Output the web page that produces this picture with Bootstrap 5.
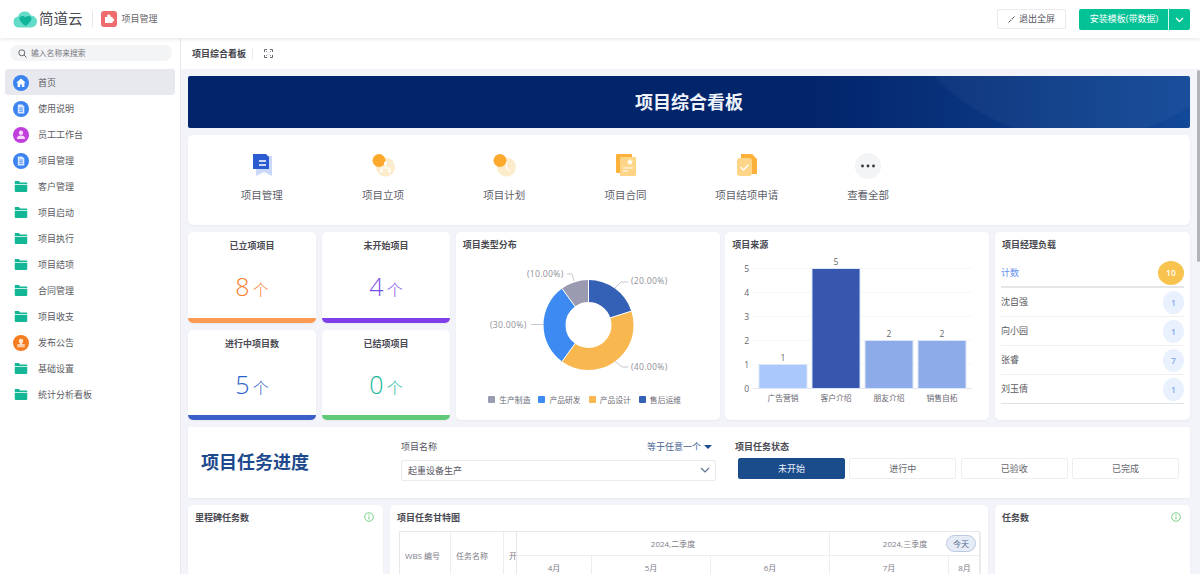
<!DOCTYPE html>
<html lang="zh-CN">
<head>
    <meta charset="UTF-8">
    <title>项目综合看板</title>
    <link href="https://cdn.jsdelivr.net/npm/bootstrap@5.3.3/dist/css/bootstrap.min.css" rel="stylesheet">
    <style>
        html, body { height: 100%; }
        body { overflow: hidden; font-family: "Open Sans", "Noto Sans CJK SC", sans-serif; font-size: 9px; color: #55555f; background: #fff; }
        .top-bar { height: 38px; flex: none; padding: 0 10px 0 13px; background: #fff; box-shadow: 0 1px 4px rgba(30, 30, 60, .12); position: relative; z-index: 2; }
        .logo-text { font-size: 14.5px; color: #4a4a52; margin-left: 2px; }
        .top-sep { width: 1px; height: 16px; background: #e8e8ec; margin: 0 8px 0 9px; }
        .app-name { margin-left: 5px; color: #666; }
        .btn-exit { width: 69px; height: 20px; padding: 0; font-size: 9px; color: #55555f; background: #fff; border: 1px solid #e9e9ee; border-radius: 2px; margin-right: 13px; }
        .btn-install { height: 21px; padding: 0; font-size: 9px; color: #fff; background: #04c295; border: 0; border-radius: 2px; }
        .btn-install:first-child { width: 90px; }
        .btn-install:last-child { width: 22px; border-left: 1px solid #d8f5ec; }
        .side-bar { width: 181px; flex: none; padding: 7px 5px 0; border-right: 1px solid #e9e9ee; background: #fff; }
        .side-search { height: 16px; margin: 0 3px 8px 5px; padding: 1px 0 0 8px; gap: 4px; background: #f3f4f6; border-radius: 8px; font-size: 7.8px; color: #77777f; }
        .side-link { height: 26px; padding: 1px 0 0 8px; gap: 9px; color: #5a5a62; border-radius: 3px; font-size: 9px; }
        .side-link.active { background: #e8e9ee; }
        .side-link svg { flex: none; }
        .sub-bar { height: 31px; flex: none; padding-left: 11px; background: #fff; }
        .sub-title { font-weight: 700; color: #44444c; }
        .sub-sep { width: 1px; height: 12px; background: #ececf0; margin: 0 11px 0 6px; }
        .main-scroll { position: relative; flex: 1 1 0; min-height: 0; overflow: hidden; padding: 7px 10px 0 7px; background: #f3f4f9; }
        .scroll-thumb { position: absolute; top: 1px; right: 0; width: 3px; height: 192px; background: #b4b4b8; border-radius: 2px; }
        .panel { background: #fff; border: 0; border-radius: 5px; box-shadow: 0 1px 2px rgba(40, 40, 80, .05); }
        .hero { height: 52px; margin-bottom: 7px; border-radius: 2px; font-size: 18px; font-weight: 700; color: #eef2fa;
            background: radial-gradient(circle 200px at 892px -136px, rgba(255, 255, 255, .035) 99%, rgba(255, 255, 255, 0) 100%), linear-gradient(90deg, #02246a 0, #02246a 62%, #124998 100%); }
        .quick-panel { height: 90px; margin-bottom: 7px; padding: 18px 0 0 13px; }
        .quick-item { width: 121.3px; font-size: 10.5px; color: #60606a; }
        .quick-icon { height: 26px; margin-bottom: 9px; }
        .stat-row { display: grid; grid-template-columns: 262px 264px 264px 195px; gap: 5.67px; height: 188px; margin-bottom: 7px; }
        .stat-grid { display: grid; grid-template-columns: 1fr 1fr; grid-template-rows: 91px 90px; gap: 7px 6px; }
        .stat-box { overflow: hidden; border-bottom: 5px solid; padding-top: 8px; }
        .stat-label { font-weight: 700; color: #4a4a52; line-height: 12px; }
        .stat-value { font-size: 25px; font-weight: 300; line-height: 34px; margin-top: 17px; }
        .stat-value span { font-size: 16px; margin-left: 3px; }
        .panel-title { height: 26px; padding: 7px 0 0 7px; line-height: 12px; font-weight: 700; color: #4a4a52; }
        .legend-row { gap: 8px; font-size: 7.8px; color: #6a6a74; padding-right: 6px; margin-top: 3px; }
        .legend-row i { display: inline-block; width: 7px; height: 7px; margin-right: 4px; border-radius: 1px; }
        .load-list { margin: 1px 6px 0; }
        .load-list .list-group-item { height: 29px; padding: 0; color: #5a5a62; font-size: 9px; border-color: #f0f0f3; background: transparent; }
        .load-list .load-head { color: #5f8ff0; height: 29px; border-bottom: 2px solid #e6e6e6; }
        .load-num { width: 21px; height: 23px; padding: 0; line-height: 23px; border-radius: 50%; background: #e9f1fe; color: #86abef; font-size: 8.5px; font-weight: 600; }
        .load-head .load-num { width: 26px; height: 24px; line-height: 24px; background: #f8c34e; color: #fff; }
        .filter-panel { height: 71px; margin-bottom: 7px; border-radius: 2px; padding: 0 10px 0 13px; }
        .filter-title { width: 200px; font-size: 18px; font-weight: 700; color: #1d4a8d; }
        .filter-name { width: 315px; margin-right: 19px; padding-top: 13px; }
        .filter-hint { color: #44608f; margin-right: 4px; }
        .filter-caret { display: inline-block; margin-left: 3px; border: 4px solid transparent; border-top-color: #1d4a8d; border-bottom: 0; vertical-align: 1px; }
        .filter-select { height: 21px; margin-top: 6px; padding: 0 24px 0 6px; font-size: 9px; line-height: 19px; color: #55555f; border-color: #e9e9ee; border-radius: 2px; background-size: 10px 7px; background-position: right 5px center;
            background-image: url("data:image/svg+xml,%3csvg xmlns='http://www.w3.org/2000/svg' viewBox='0 0 10 7'%3e%3cpath fill='none' stroke='%23607394' stroke-width='1.2' d='M1 1l4 4 4-4'/%3e%3c/svg%3e"); }
        .filter-state { width: 444px; padding-top: 13px; }
        .filter-state .state-label { font-weight: 700; color: #4a4a52; line-height: 14px; margin-bottom: 4px; }
        .state-btn { width: 107px; height: 21px; padding: 0; font-size: 9px; color: #66666e; background: #fff; border: 1px solid #eeeef2; border-radius: 2px; }
        .state-btn.active { background: #1a4c8c; border-color: #1a4c8c; color: #e8eef8; }
        .state-wrap { padding-left: 3px; gap: 4.6px; }
        .bottom-row { display: grid; grid-template-columns: 195px 598px 195px; gap: 7px; min-height: 200px; }
        .info-dot { margin: 7px 9px 0 0; }
        .gantt-box { position: relative; display: grid; grid-template-columns: 51px 53px 13px 75px 119px 119px 119px 32px; grid-template-rows: 24px 24px; width: 581px; margin-left: 9px; border: 1px solid #e8e8ec; font-size: 8px; color: #7c7c86; }
        .gantt-box > div { display: flex; align-items: center; justify-content: center; border-right: 1px solid #eeeef1; border-bottom: 1px solid #eeeef1; white-space: nowrap; overflow: hidden; }
        .gantt-box > .gantt-fix { grid-row: 1 / span 2; justify-content: flex-start; padding-left: 5px; }
        .gantt-box > .gantt-clip { border-right: 1px solid #e8e8ec; }
        .gantt-box > .today-pill { position: absolute; top: 3px; right: 3px; width: 30px; height: 17px; background: #e6ecf6; border: 1px solid #b9c8df; border-radius: 9px; color: #53698f; font-size: 8px; }
    </style>
</head>
<body>
    <svg width="0" height="0" class="position-absolute">
        <symbol id="ico-folder" viewBox="0 0 13 11"><path d="M0 1.2C0 .5.5 0 1.2 0h3.2l1.3 1.6h6.1c.7 0 1.2.5 1.2 1.1v.3H0z" fill="#14b795"/><path d="M0 3.8h13v6c0 .7-.5 1.2-1.2 1.2H1.2C.5 11 0 10.500 0 9.800z" fill="#14b795"/></symbol>
        <symbol id="ico-doc" viewBox="0 0 16 16"><circle cx="8" cy="8" r="8" fill="#3a83f1"/><path d="M4.800 3.500h4.500l2 2v7h-6.500z" fill="#dbe8fd"/><path d="M6.300 7h3.500M6.300 8.700h3.500M6.300 10.400h3.500" stroke="#3a83f1" stroke-width=".8"/></symbol>
        <symbol id="ico-info" viewBox="0 0 10 10"><circle cx="5" cy="5" r="4.300" fill="none" stroke="#6cc97f" stroke-width=".9"/><path d="M5 4.400v3" stroke="#6cc97f" stroke-width="1"/><circle cx="5" cy="2.900" r=".6" fill="#6cc97f"/></symbol>
    </svg>

    <div class="d-flex flex-column vh-100">
        <header class="top-bar d-flex align-items-center">
            <svg width="24" height="18" viewBox="0 0 24 18"><path d="M6 17.500a5.500 5.500 0 0 1-1-10.900A7 7 0 0 1 18 5.500a6 6 0 0 1 0 12z" fill="#62dcc8"/><path d="M12.500 16C8.500 13 6.500 10.800 6.500 8.200c0-2.200 3.300-3.300 6-.9 2.700-2.400 6-1.300 6 .9 0 2.600-2 4.800-6 7.800z" fill="#10b498"/></svg>
            <span class="logo-text">简道云</span>
            <span class="top-sep"></span>
            <svg width="16" height="16" viewBox="0 0 16 16"><rect width="16" height="16" rx="3" fill="#ee6b6e"/><rect x="4" y="6" width="7.500" height="6" fill="#fff"/><circle cx="7.800" cy="5.200" r="1.800" fill="#fff"/><circle cx="11.600" cy="9" r="1.600" fill="#fff"/></svg>
            <span class="app-name">项目管理</span>
            <button class="btn btn-exit ms-auto" type="button">
                <svg width="7" height="7" viewBox="0 0 7 7" class="me-1"><path d="M.5 6.500l2-2M4.500 2.500l2-2" stroke="#55555f" stroke-width="1"/><path d="M2.300 3.300l1.400 1.400-1.600.3zM4.700 3.700L3.300 2.300l1.600-.3z" fill="#55555f"/></svg>退出全屏
            </button>
            <div class="btn-group">
                <button class="btn btn-install" type="button">安装模板(带数据)</button>
                <button class="btn btn-install" type="button">
                    <svg width="9" height="6" viewBox="0 0 9 6"><path d="M1 1l3.500 3.500L8 1" fill="none" stroke="#fff" stroke-width="1.300"/></svg>
                </button>
            </div>
        </header>

        <div class="d-flex flex-grow-1 overflow-hidden">
            <aside class="side-bar">
                <div class="side-search d-flex align-items-center">
                    <svg width="9" height="9" viewBox="0 0 9 9"><circle cx="3.800" cy="3.800" r="3" fill="none" stroke="#66666e"/><path d="M6 6l2.500 2.500" stroke="#66666e"/></svg>
                    输入名称来搜索
                </div>
                <nav class="nav flex-column">
                    <a class="nav-link side-link active d-flex align-items-center" href="#"><svg width="16" height="16" viewBox="0 0 16 16"><circle cx="8" cy="8" r="8" fill="#3a83f1"/><path d="M8 3.500L3.300 7.700h1.300v4.300h2.500V9.500h1.800V12h2.500V7.700h1.300z" fill="#fff"/></svg>首页</a>
                    <a class="nav-link side-link d-flex align-items-center" href="#"><svg width="16" height="16"><use href="#ico-doc"/></svg>使用说明</a>
                    <a class="nav-link side-link d-flex align-items-center" href="#"><svg width="16" height="16" viewBox="0 0 16 16"><circle cx="8" cy="8" r="8" fill="#c13fdc"/><circle cx="8" cy="5.800" r="2.200" fill="#f6dcfb"/><path d="M3.800 12c0-2.400 1.800-3.500 4.200-3.500s4.200 1.100 4.200 3.500z" fill="#f6dcfb"/></svg>员工工作台</a>
                    <a class="nav-link side-link d-flex align-items-center" href="#"><svg width="16" height="16"><use href="#ico-doc"/></svg>项目管理</a>
                    <a class="nav-link side-link d-flex align-items-center" href="#"><svg width="16" height="11" viewBox="-1.500 0 16 11"><use href="#ico-folder" width="13" height="11"/></svg>客户管理</a>
                    <a class="nav-link side-link d-flex align-items-center" href="#"><svg width="16" height="11" viewBox="-1.500 0 16 11"><use href="#ico-folder" width="13" height="11"/></svg>项目启动</a>
                    <a class="nav-link side-link d-flex align-items-center" href="#"><svg width="16" height="11" viewBox="-1.500 0 16 11"><use href="#ico-folder" width="13" height="11"/></svg>项目执行</a>
                    <a class="nav-link side-link d-flex align-items-center" href="#"><svg width="16" height="11" viewBox="-1.500 0 16 11"><use href="#ico-folder" width="13" height="11"/></svg>项目结项</a>
                    <a class="nav-link side-link d-flex align-items-center" href="#"><svg width="16" height="11" viewBox="-1.500 0 16 11"><use href="#ico-folder" width="13" height="11"/></svg>合同管理</a>
                    <a class="nav-link side-link d-flex align-items-center" href="#"><svg width="16" height="11" viewBox="-1.500 0 16 11"><use href="#ico-folder" width="13" height="11"/></svg>项目收支</a>
                    <a class="nav-link side-link d-flex align-items-center" href="#"><svg width="16" height="16" viewBox="0 0 16 16"><circle cx="8" cy="8" r="8" fill="#f57c1f"/><circle cx="8" cy="6" r="2.300" fill="#fde6d2"/><path d="M7 7.500h2v1.700h2.800v1.500H4.200V9.200H7zM4.200 11.300h7.600v1H4.200z" fill="#fde6d2"/></svg>发布公告</a>
                    <a class="nav-link side-link d-flex align-items-center" href="#"><svg width="16" height="11" viewBox="-1.500 0 16 11"><use href="#ico-folder" width="13" height="11"/></svg>基础设置</a>
                    <a class="nav-link side-link d-flex align-items-center" href="#"><svg width="16" height="11" viewBox="-1.500 0 16 11"><use href="#ico-folder" width="13" height="11"/></svg>统计分析看板</a>
                </nav>
            </aside>

            <div class="d-flex flex-column flex-grow-1 overflow-hidden">
                <div class="sub-bar d-flex align-items-center">
                    <span class="sub-title">项目综合看板</span>
                    <span class="sub-sep"></span>
                    <svg width="9" height="9" viewBox="0 0 9 9"><path d="M.5 3V.5H3M6 .5h2.500V3M8.500 6v2.500H6M3 8.500H.5V6" fill="none" stroke="#66666e"/><path d="M2 2l1.300 1.300M7 2L5.700 3.300M7 7L5.700 5.700M2 7l1.300-1.300" stroke="#66666e" stroke-width=".7"/></svg>
                </div>

                <main class="main-scroll">
                    <div class="scroll-thumb"></div>
                    <div class="hero d-flex align-items-center justify-content-center">项目综合看板</div>

                    <section class="panel quick-panel d-flex">
                        <div class="quick-item text-center">
                            <div class="quick-icon"><svg width="22" height="24" viewBox="0 0 22 24"><path d="M5 3h16v20l-8-4-8 4z" fill="#c9d8fb"/><path d="M2 1h13l3 3v12H2z" fill="#2b5bd0"/><path d="M8 8h7M8 12h7" stroke="#fff" stroke-width="1.500"/></svg></div>
                            项目管理
                        </div>
                        <div class="quick-item text-center">
                            <div class="quick-icon"><svg width="24" height="24" viewBox="0 0 24 24"><circle cx="14.500" cy="14" r="9.500" fill="#fdeccb"/><circle cx="8" cy="7.500" r="6.500" fill="#fca92e"/><path d="M14.500 10v4M10.500 18v-3h8v3" fill="none" stroke="#fff" stroke-width="1.200"/><circle cx="14.500" cy="10" r="1.500" fill="#fff"/><circle cx="10.500" cy="18" r="1.500" fill="#fff"/><circle cx="18.500" cy="18" r="1.500" fill="#fff"/></svg></div>
                            项目立项
                        </div>
                        <div class="quick-item text-center">
                            <div class="quick-icon"><svg width="24" height="24" viewBox="0 0 24 24"><circle cx="14.500" cy="14" r="9.500" fill="#fdeccb"/><circle cx="8" cy="7.500" r="6.500" fill="#fca92e"/><path d="M14.500 9v6l4 3" fill="none" stroke="#fff" stroke-width="1.200"/></svg></div>
                            项目计划
                        </div>
                        <div class="quick-item text-center">
                            <div class="quick-icon"><svg width="22" height="24" viewBox="0 0 22 24"><rect x="1" y="1" width="16" height="19" rx="1" fill="#fdb13a"/><rect x="5" y="4" width="16" height="19" rx="1" fill="#fed487"/><path d="M15 5.500l1 2.200 2.300.2-1.700 1.500.5 2.300-2.100-1.200-2.100 1.200.5-2.300-1.700-1.500 2.300-.2z" fill="#fff"/><path d="M8 15h10M8 18h5" stroke="#fff" stroke-width="1.200"/></svg></div>
                            项目合同
                        </div>
                        <div class="quick-item text-center">
                            <div class="quick-icon"><svg width="22" height="24" viewBox="0 0 22 24"><path d="M5 1h11l5 5v15H5z" fill="#fdb13a"/><rect x="1" y="5" width="15" height="18" rx="3" fill="#fed487"/><path d="M4.500 14l3 3 5-5.500" fill="none" stroke="#fff" stroke-width="1.300"/></svg></div>
                            项目结项申请
                        </div>
                        <div class="quick-item text-center">
                            <div class="quick-icon"><svg width="26" height="26" viewBox="0 0 26 26"><circle cx="13" cy="13" r="13" fill="#f3f4f6"/><circle cx="7.500" cy="13" r="1.400" fill="#33333d"/><circle cx="13" cy="13" r="1.400" fill="#33333d"/><circle cx="18.500" cy="13" r="1.400" fill="#33333d"/></svg></div>
                            查看全部
                        </div>
                    </section>

                    <section class="stat-row">
                        <div class="stat-grid">
                            <div class="panel stat-box text-center" style="border-color:#fb9b53">
                                <div class="stat-label">已立项项目</div>
                                <div class="stat-value" style="color:#fb7d2f">8<span>个</span></div>
                            </div>
                            <div class="panel stat-box text-center" style="border-color:#7f3fe8">
                                <div class="stat-label">未开始项目</div>
                                <div class="stat-value" style="color:#7a4fe8">4<span>个</span></div>
                            </div>
                            <div class="panel stat-box text-center" style="border-color:#3a5fc8">
                                <div class="stat-label">进行中项目数</div>
                                <div class="stat-value" style="color:#2a62c8">5<span>个</span></div>
                            </div>
                            <div class="panel stat-box text-center" style="border-color:#5fcb78">
                                <div class="stat-label">已结项项目</div>
                                <div class="stat-value" style="color:#17b79c">0<span>个</span></div>
                            </div>
                        </div>

                        <div class="panel">
                            <div class="panel-title">项目类型分布</div>
                            <svg width="264" height="134" viewBox="0 0 264 134" class="d-block">
                                <g fill="none" stroke-width="22" transform="rotate(-90 132.500 67)">
                                    <circle cx="132.500" cy="67" r="34" pathLength="100" stroke="#3460b5" stroke-dasharray="20 80"/>
                                    <circle cx="132.500" cy="67" r="34" pathLength="100" stroke="#f9b750" stroke-dasharray="40 60" stroke-dashoffset="-20"/>
                                    <circle cx="132.500" cy="67" r="34" pathLength="100" stroke="#3d8bf2" stroke-dasharray="30 70" stroke-dashoffset="-60"/>
                                    <circle cx="132.500" cy="67" r="34" pathLength="100" stroke="#9a9ab0" stroke-dasharray="10 90" stroke-dashoffset="-90"/>
                                </g>
                                <path d="M132.500 22v22M175.300 53.100l-21.900 7M106.100 103.400l13.500-18.600M106.100 30.600l13.500 18.600" stroke="#fff" stroke-width="1"/>
                                <path d="M159 30l6-6h7M159 103l7 6h6M87 66.500H75M111 16h5l2 7" fill="none" stroke="#c8c8d0" stroke-width="1"/>
                                <g font-size="8.600" fill="#8f8f99" letter-spacing=".3">
                                    <text x="71" y="19">(10.00%)</text>
                                    <text x="175" y="26">(20.00%)</text>
                                    <text x="34" y="70">(30.00%)</text>
                                    <text x="175" y="112">(40.00%)</text>
                                </g>
                            </svg>
                            <div class="legend-row d-flex justify-content-center">
                                <span><i style="background:#9a9ab0"></i>生产制造</span>
                                <span><i style="background:#3d8bf2"></i>产品研发</span>
                                <span><i style="background:#f9b750"></i>产品设计</span>
                                <span><i style="background:#3460b5"></i>售后运维</span>
                            </div>
                        </div>

                        <div class="panel">
                            <div class="panel-title">项目来源</div>
                            <svg width="264" height="150" viewBox="-1 0 264 150" class="d-block overflow-visible">
                                <path d="M27 10.500h219M27 34.500h219M27 58.500h219M27 82.500h219M27 106.500h219" stroke="#f2f2f5" stroke-dasharray="2 2"/>
                                <path d="M27 130.500h219" stroke="#e6e6ea"/>
                                <g stroke="#dbe5f8" stroke-width="1">
                                    <rect x="33" y="106.500" width="48" height="24" fill="#aac8fb"/>
                                    <rect x="86" y="10.500" width="48" height="120" fill="#3757ae"/>
                                    <rect x="139" y="82.500" width="48" height="48" fill="#8dabe8"/>
                                    <rect x="192" y="82.500" width="48" height="48" fill="#8dabe8"/>
                                </g>
                                <g font-size="8.500" fill="#66666e" text-anchor="middle">
                                    <text x="57" y="103">1</text><text x="110" y="7">5</text><text x="163" y="79">2</text><text x="216" y="79">2</text>
                                    <text x="23" y="13.500" text-anchor="end">5</text><text x="23" y="37.500" text-anchor="end">4</text><text x="23" y="61.500" text-anchor="end">3</text><text x="23" y="85.500" text-anchor="end">2</text><text x="23" y="109.500" text-anchor="end">1</text><text x="23" y="133.500" text-anchor="end">0</text>
                                </g>
                                <g font-size="7.800" fill="#66666e" text-anchor="middle">
                                    <text x="57" y="143">广告营销</text><text x="110" y="143">客户介绍</text><text x="163" y="143">朋友介绍</text><text x="216" y="143">销售自拓</text>
                                </g>
                            </svg>
                        </div>

                        <div class="panel">
                            <div class="panel-title">项目经理负载</div>
                            <ul class="list-group list-group-flush load-list">
                                <li class="list-group-item load-head d-flex align-items-center justify-content-between">计数<span class="badge load-num">10</span></li>
                                <li class="list-group-item d-flex align-items-center justify-content-between">沈自强<span class="badge load-num">1</span></li>
                                <li class="list-group-item d-flex align-items-center justify-content-between">向小园<span class="badge load-num">1</span></li>
                                <li class="list-group-item d-flex align-items-center justify-content-between">张睿<span class="badge load-num">7</span></li>
                                <li class="list-group-item d-flex align-items-center justify-content-between border-bottom">刘玉倩<span class="badge load-num">1</span></li>
                            </ul>
                        </div>
                    </section>

                    <section class="panel filter-panel d-flex">
                        <div class="filter-title align-self-center">项目任务进度</div>
                        <div class="filter-name">
                            <div class="d-flex justify-content-between">
                                <span>项目名称</span>
                                <span class="filter-hint">等于任意一个<i class="filter-caret"></i></span>
                            </div>
                            <select class="form-select filter-select"><option>起重设备生产</option></select>
                        </div>
                        <div class="filter-state">
                            <div class="state-label">项目任务状态</div>
                            <div class="state-wrap d-flex">
                                <button class="btn state-btn active" type="button">未开始</button>
                                <button class="btn state-btn" type="button">进行中</button>
                                <button class="btn state-btn" type="button">已验收</button>
                                <button class="btn state-btn" type="button">已完成</button>
                            </div>
                        </div>
                    </section>

                    <section class="bottom-row">
                        <div class="panel">
                            <div class="d-flex justify-content-between">
                                <div class="panel-title">里程碑任务数</div>
                                <svg class="info-dot" width="10" height="10"><use href="#ico-info"/></svg>
                            </div>
                        </div>
                        <div class="panel">
                            <div class="panel-title">项目任务甘特图</div>
                            <div class="gantt-box">
                                <div class="gantt-fix">WBS 编号</div>
                                <div class="gantt-fix">任务名称</div>
                                <div class="gantt-fix gantt-clip">开</div>
                                <div style="grid-column: span 3">2024,二季度</div>
                                <div style="grid-column: span 2">2024,三季度</div>
                                <div>4月</div><div>5月</div><div>6月</div><div>7月</div><div>8月</div>
                                <div class="today-pill">今天</div>
                            </div>
                        </div>
                        <div class="panel">
                            <div class="d-flex justify-content-between">
                                <div class="panel-title">任务数</div>
                                <svg class="info-dot" width="10" height="10"><use href="#ico-info"/></svg>
                            </div>
                        </div>
                    </section>
                </main>
            </div>
        </div>
    </div>
    <script src="https://cdn.jsdelivr.net/npm/bootstrap@5.3.3/dist/js/bootstrap.bundle.min.js"></script>
</body>
</html>
